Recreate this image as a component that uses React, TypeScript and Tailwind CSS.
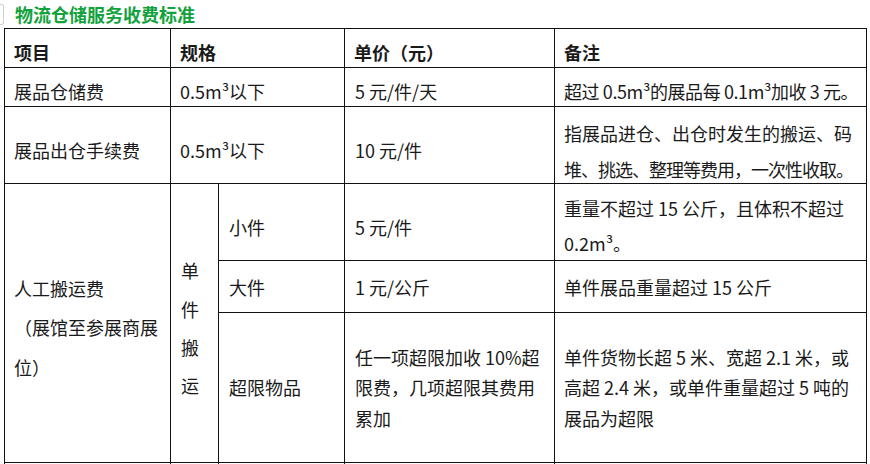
const cell = "bg-white flex flex-col justify-center pl-[9px] text-[18px] text-[#1a1a1a] whitespace-nowrap"

export default function App() {
	return (
		<div className="w-[870px] h-[464px] overflow-hidden bg-white font-['Noto_Sans_CJK_SC',sans-serif]">
			<div className="flex items-center h-[28px]">
				<div className="w-[4px] h-[21px] border border-l-0 border-[#cfcfcf] rounded-r-[3px]" />
				<h1 className="ml-[11px] text-[18px] font-bold leading-none text-[#12a23c]">物流仓储服务收费标准</h1>
			</div>

			<div className="ml-[4px] w-fit p-px bg-[#111] grid gap-px grid-cols-[165px_47px_125px_209px_311px] grid-rows-[38px_38px_76px_76px_51px_149px_40px]">
				{/* header */}
				<div className={`${cell} bg-[#bfbfbf] font-bold pt-[8px]`}>项目</div>
				<div className={`${cell} bg-[#bfbfbf] font-bold pt-[8px] col-span-2`}>规格</div>
				<div className={`${cell} bg-[#bfbfbf] font-bold pt-[8px]`}>单价（元）</div>
				<div className={`${cell} bg-[#bfbfbf] font-bold pt-[8px]`}>备注</div>

				{/* 展品仓储费 */}
				<div className={`${cell} pt-[8px]`}>展品仓储费</div>
				<div className={`${cell} pt-[8px] col-span-2`}>0.5m³以下</div>
				<div className={`${cell} pt-[8px] pl-[10px]`}>5 元/件/天</div>
				<div className={`${cell} pt-[8px] tracking-[-0.4px]`}>超过 0.5m³的展品每 0.1m³加收 3 元。</div>

				{/* 展品出仓手续费 */}
				<div className={`${cell} pt-[11px]`}>展品出仓手续费</div>
				<div className={`${cell} pt-[11px] col-span-2`}>0.5m³以下</div>
				<div className={`${cell} pt-[11px] pl-[10px]`}>10 元/件</div>
				<div className={`${cell} pt-[11px] leading-[36px]`}>
					<span>指展品进仓、出仓时发生的搬运、码</span>
					<span className="tracking-[-1px]">堆、挑选、整理等费用，一次性收取。</span>
				</div>

				{/* 人工搬运费 */}
				<div className={`${cell} row-span-3 pt-[10px] leading-[39.5px]`}>
					<span>人工搬运费</span>
					<span>（展馆至参展商展</span>
					<span>位）</span>
				</div>
				<div className={`${cell} row-span-3 pt-[10px] pl-[10px] leading-[38.3px]`}>
					<span>单</span>
					<span>件</span>
					<span>搬</span>
					<span>运</span>
				</div>

				<div className={`${cell} pt-[11px] pl-[10px]`}>小件</div>
				<div className={`${cell} pt-[11px] pl-[10px]`}>5 元/件</div>
				<div className={`${cell} pt-[8px] leading-[35px]`}>
					<span>重量不超过 15 公斤，且体积不超过</span>
					<span>0.2m³。</span>
				</div>

				<div className={`${cell} pt-[2px] pl-[10px]`}>大件</div>
				<div className={`${cell} pt-[2px] pl-[10px]`}>1 元/公斤</div>
				<div className={`${cell} pt-[2px]`}>单件展品重量超过 15 公斤</div>

				<div className={`${cell} pl-[10px]`}>超限物品</div>
				<div className={`${cell} pl-[10px] leading-[30.5px]`}>
					<span>任一项超限加收 10%超</span>
					<span>限费，几项超限其费用</span>
					<span>累加</span>
				</div>
				<div className={`${cell} leading-[30.5px]`}>
					<span>单件货物长超 5 米、宽超 2.1 米，或</span>
					<span>高超 2.4 米，或单件重量超过 5 吨的</span>
					<span>展品为超限</span>
				</div>

				{/* next row, cut off */}
				<div className={cell} />
				<div className={cell} />
				<div className={cell} />
				<div className={cell} />
				<div className={cell} />
			</div>
		</div>
	)
}
